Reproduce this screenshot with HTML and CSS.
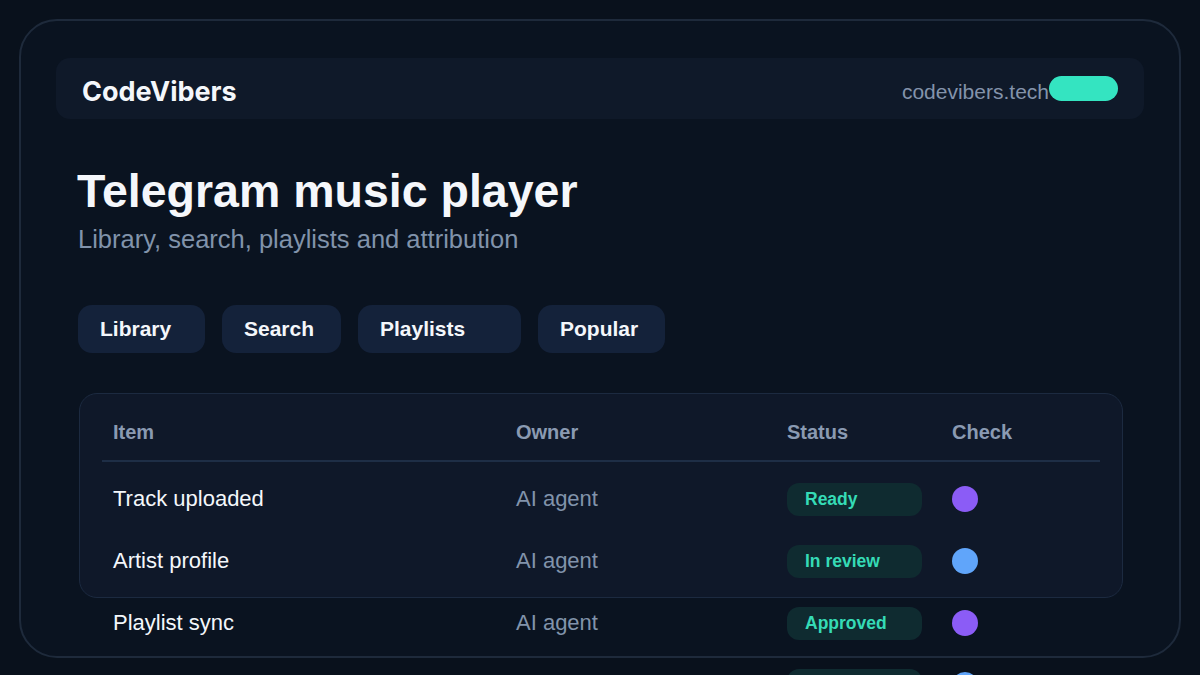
FILE: index.html
```html
<!DOCTYPE html>
<html lang="en">
<head>
    <meta charset="UTF-8">
    <meta name="viewport" content="width=device-width, initial-scale=1.0">
    <title>CodeVibers - Telegram music player</title>
    <link rel="stylesheet" href="styles.css">
</head>
<body>

<div class="frame">
    <!-- Top bar -->
    <div class="topbar">
        <span class="brand">CodeVibers</span>
        <div class="site">
            <span>codevibers.tech</span>
            <span class="pill"></span>
        </div>
    </div>

    <div class="content">
        <h1 class="title">Telegram music player</h1>
        <p class="subtitle">Library, search, playlists and attribution</p>

        <!-- Sections -->
        <div class="tabs">
            <button class="tab">Library</button>
            <button class="tab">Search</button>
            <button class="tab">Playlists</button>
            <button class="tab">Popular</button>
        </div>

        <!-- Task table -->
        <div class="card">
            <div class="table">
                <div class="row head">
                    <div class="cell">Item</div>
                    <div class="cell">Owner</div>
                    <div class="cell">Status</div>
                    <div class="cell">Check</div>
                </div>
                <div class="rows">
                    <div class="row">
                        <div class="cell name">Track uploaded</div>
                        <div class="cell owner">AI agent</div>
                        <div class="cell"><span class="status">Ready</span></div>
                        <div class="cell"><span class="dot purple"></span></div>
                    </div>
                    <div class="row">
                        <div class="cell name">Artist profile</div>
                        <div class="cell owner">AI agent</div>
                        <div class="cell"><span class="status">In review</span></div>
                        <div class="cell"><span class="dot blue"></span></div>
                    </div>
                    <div class="row">
                        <div class="cell name">Playlist sync</div>
                        <div class="cell owner">AI agent</div>
                        <div class="cell"><span class="status">Approved</span></div>
                        <div class="cell"><span class="dot purple"></span></div>
                    </div>
                    <div class="row">
                        <div class="cell name">Attribution</div>
                        <div class="cell owner">AI agent</div>
                        <div class="cell"><span class="status">Ready</span></div>
                        <div class="cell"><span class="dot blue"></span></div>
                    </div>
                </div>
            </div>
        </div>
    </div>
</div>

</body>
</html>
```

FILE: styles.css
```css
body {
    margin: 0;
    background-color: #09111c;
    color: #f4f7fb;
    font-family: "Liberation Sans", Arial, sans-serif;
    height: 675px;
    overflow: hidden;
}
.frame {
    margin: 19px;
    box-sizing: border-box;
    height: 639px;
    border: 2px solid #1e2a3b;
    border-radius: 38px;
    background-color: #0a1320;
    padding: 37px 35px;
}
.topbar {
    display: flex;
    align-items: center;
    justify-content: space-between;
    height: 61px;
    padding: 0 26px;
    border-radius: 14px;
    background-color: #0f1929;
}
.brand {
    font-family: "Inter", "Liberation Sans", sans-serif;
    font-size: 27px;
    font-weight: 700;
    color: #f4f7fb;
    margin-top: 6px;
}
.site {
    display: flex;
    align-items: center;
    font-size: 21px;
    color: #8393ab;
}
.site span:first-child {
    margin-top: 6px;
}
.pill {
    width: 69px;
    height: 25px;
    border-radius: 13px;
    background-color: #34e4c1;
}
.content {
    padding: 0 21px 0 21px;
}
.title {
    margin: 44px 0 0;
    font-size: 46.5px;
    font-weight: 700;
    line-height: 56px;
    color: #f5f7fb;
}
.subtitle {
    margin: 5px 0 0;
    font-size: 25.5px;
    line-height: 30px;
    color: #8193ab;
    padding-left: 1px;
}
/* Tab buttons */
.tabs {
    display: grid;
    grid-template-columns: 127px 119px 163px 127px;
    gap: 17px;
    margin-top: 51px;
    padding-left: 1px;
}
.tab {
    height: 48px;
    border: none;
    border-radius: 14px;
    background-color: #14223a;
    color: #f4f7fb;
    font-family: "Liberation Sans", Arial, sans-serif;
    font-size: 21px;
    font-weight: 700;
    text-align: left;
    padding: 0 22px;
}
/* Table card */
.card {
    margin: 40px 0 0 2px;
    height: 205px;
    box-sizing: border-box;
    border: 1.5px solid #1c2a40;
    border-radius: 18px;
    background-color: #0f1829;
    padding: 0 22px;
}
.row {
    display: grid;
    grid-template-columns: 403px 271px 165px 1fr;
    align-items: center;
    height: 62px;
}
.row.head {
    height: 56px;
    padding-top: 10px;
    border-bottom: 2px solid #1e2e46;
    font-size: 20px;
    font-weight: 700;
    color: #8a9ab2;
}
.rows {
    padding-top: 6px;
}
.cell {
    padding-left: 11px;
}
.name {
    font-size: 22px;
    color: #f4f7fb;
}
.owner {
    font-size: 22px;
    color: #8193ab;
}
.status {
    display: flex;
    align-items: center;
    width: 135px;
    height: 33px;
    box-sizing: border-box;
    padding-left: 18px;
    border-radius: 12px;
    background-color: #0f2b30;
    color: #35dbb6;
    font-size: 17.5px;
    font-weight: 700;
}
.dot {
    display: block;
    width: 26px;
    height: 26px;
    border-radius: 50%;
}
.purple {
    background-color: #8b5cf6;
}
.blue {
    background-color: #60a5fa;
}
```
